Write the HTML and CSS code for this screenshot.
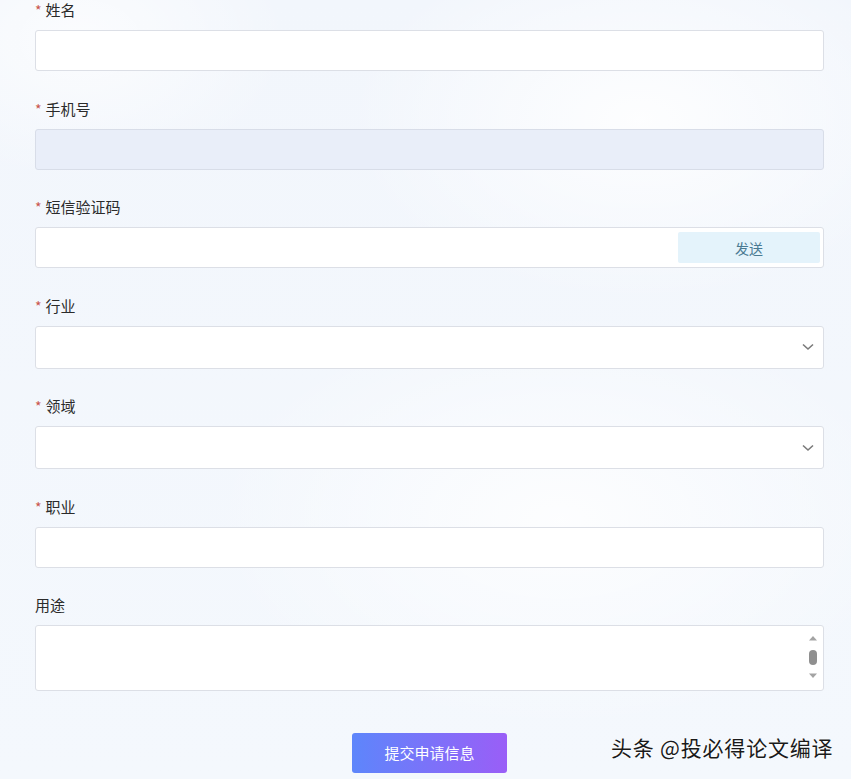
FILE: index.html
```html
<!DOCTYPE html>
<html lang="zh-CN">
<head>
    <meta charset="UTF-8">
    <meta name="viewport" content="width=device-width, initial-scale=1.0">
    <title>申请信息</title>
    <link rel="stylesheet" href="styles.css">
</head>
<body>
    <form class="apply-form">
        <div class="form-item">
            <label class="form-label"><span class="req">*</span>姓名</label>
            <input class="form-input" type="text">
        </div>
        <div class="form-item">
            <label class="form-label"><span class="req">*</span>手机号</label>
            <input class="form-input disabled" type="text" disabled>
        </div>
        <div class="form-item">
            <label class="form-label"><span class="req">*</span>短信验证码</label>
            <div class="code-box">
                <input class="code-input" type="text">
                <button class="send-btn" type="button">发送</button>
            </div>
        </div>
        <div class="form-item">
            <label class="form-label"><span class="req">*</span>行业</label>
            <div class="select-box">
                <svg class="chevron" width="12" height="8" viewBox="0 0 12 8"><path d="M1 1.5 L6 6 L11 1.5" fill="none" stroke="#7a7a7a" stroke-width="1.6"/></svg>
            </div>
        </div>
        <div class="form-item">
            <label class="form-label"><span class="req">*</span>领域</label>
            <div class="select-box">
                <svg class="chevron" width="12" height="8" viewBox="0 0 12 8"><path d="M1 1.5 L6 6 L11 1.5" fill="none" stroke="#7a7a7a" stroke-width="1.6"/></svg>
            </div>
        </div>
        <div class="form-item">
            <label class="form-label"><span class="req">*</span>职业</label>
            <input class="form-input" type="text">
        </div>
        <div class="form-item">
            <label class="form-label">用途</label>
            <div class="textarea-box">
                <textarea class="form-textarea"></textarea>
                <div class="fake-scroll">
                    <svg width="10" height="44" viewBox="0 0 10 44">
                        <path d="M1 5.5 L5 1 L9 5.5 Z" fill="#a3a3a3"/>
                        <rect x="1" y="15" width="8" height="15" rx="4" fill="#8f8f8f"/>
                        <path d="M1 38.5 L5 43 L9 38.5 Z" fill="#a3a3a3"/>
                    </svg>
                </div>
            </div>
        </div>
        <div class="submit-row">
            <button class="submit-btn" type="button">提交申请信息</button>
        </div>
    </form>
    <div class="watermark">头条 @投必得论文编译</div>
</body>
</html>
```

FILE: styles.css
```css
html, body {
    height: 100%;
}
body {
    margin: 0;
    overflow: hidden;
    font-family: "Noto Sans CJK SC", "Noto Sans", sans-serif;
    color: #303133;
    background-color: #f1f5fb;
    background-image:
        radial-gradient(ellipse 420px 260px at 640px 120px, rgba(255,255,255,0.85), rgba(255,255,255,0) 70%),
        radial-gradient(ellipse 500px 300px at 560px 520px, rgba(255,255,255,0.8), rgba(255,255,255,0) 70%),
        radial-gradient(ellipse 300px 200px at 80px 40px, rgba(255,255,255,0.7), rgba(255,255,255,0) 70%),
        linear-gradient(180deg, #f2f6fc 0%, #f4f8fd 100%);
    position: relative;
}
.apply-form {
    width: 789px;
    margin-left: 35px;
}
.form-item {
    margin-bottom: 27.5px;
}
.form-label {
    display: block;
    font-size: 15px;
    line-height: 20px;
    height: 20px;
    margin-bottom: 10px;
    color: #2b2b2b;
}
.req {
    color: #c9554c;
    margin-right: 4px;
    font-size: 14px;
}
.form-input {
    display: block;
    box-sizing: border-box;
    width: 100%;
    height: 41px;
    border: 1px solid #dcdfe6;
    border-radius: 3px;
    background: #fff;
    outline: none;
}
.form-input.disabled {
    background: #e9eef9;
    border-color: #d8dde8;
}
.code-box {
    box-sizing: border-box;
    display: flex;
    align-items: center;
    height: 41px;
    border: 1px solid #dcdfe6;
    border-radius: 3px;
    background: #fff;
    padding-right: 3px;
}
.code-input {
    flex: 1;
    border: none;
    height: 100%;
    background: transparent;
    outline: none;
}
.send-btn {
    width: 142px;
    height: 31px;
    border: none;
    border-radius: 2px;
    background: #e4f3fb;
    color: #4a7a92;
    font-family: inherit;
    font-size: 14px;
}
.select-box {
    box-sizing: border-box;
    height: 43px;
    border: 1px solid #dcdfe6;
    border-radius: 3px;
    background: #fff;
    display: flex;
    align-items: center;
    justify-content: flex-end;
    padding-right: 9px;
}
.textarea-box {
    position: relative;
}
.form-textarea {
    display: block;
    box-sizing: border-box;
    width: 100%;
    height: 66px;
    border: 1px solid #dcdfe6;
    border-radius: 3px;
    background: #fff;
    resize: none;
    outline: none;
}
.fake-scroll {
    position: absolute;
    right: 6px;
    top: 10px;
    line-height: 0;
}
.submit-row {
    display: flex;
    justify-content: center;
    padding-top: 14px;
}
.submit-btn {
    width: 155px;
    height: 40px;
    border: none;
    border-radius: 3px;
    background: linear-gradient(90deg, #5d86fb 0%, #9a5ef7 100%);
    color: #fff;
    font-family: inherit;
    font-size: 15px;
}
.watermark {
    position: absolute;
    left: 611px;
    top: 733px;
    font-size: 21px;
    line-height: 28px;
    color: #1a1a1a;
    text-shadow: 0 0 2px #fff, 0 0 2px #fff;
    letter-spacing: 0.8px;
}
```
